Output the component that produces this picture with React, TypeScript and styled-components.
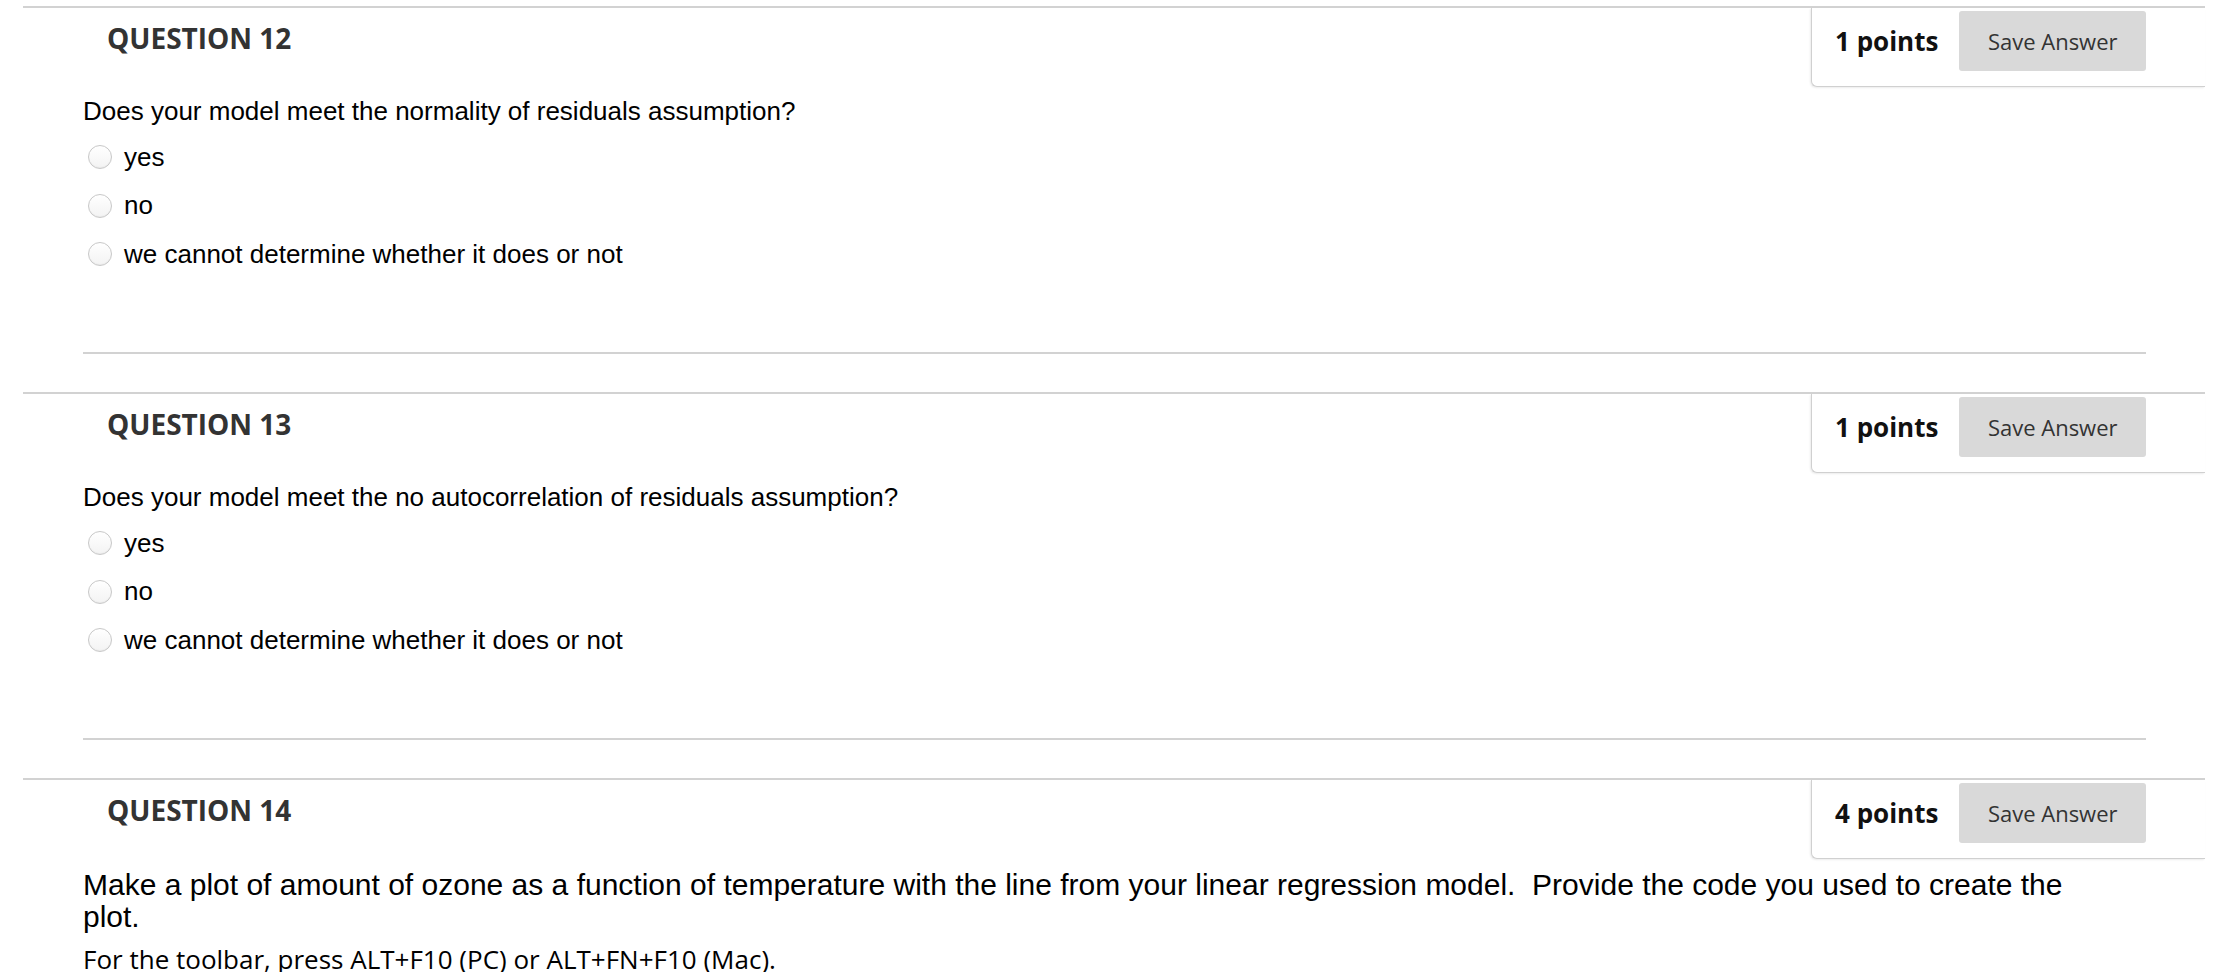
import styled, { createGlobalStyle } from "styled-components";

type Question = {
  number: number;
  points: number;
  prompt: string;
  options?: string[];
  large?: boolean;
  hint?: string;
};

const answers = ["yes", "no", "we cannot determine whether it does or not"];

const questions: Question[] = [
  {
    number: 12,
    points: 1,
    prompt: "Does your model meet the normality of residuals assumption?",
    options: answers,
  },
  {
    number: 13,
    points: 1,
    prompt: "Does your model meet the no autocorrelation of residuals assumption?",
    options: answers,
  },
  {
    number: 14,
    points: 4,
    large: true,
    prompt:
      "Make a plot of amount of ozone as a function of temperature with the line from your linear regression model.\u00a0 Provide the code you used to create the plot.",
    hint: "For the toolbar, press ALT+F10 (PC) or ALT+FN+F10 (Mac).",
  },
];

export default function App() {
  return (
    <>
      <GlobalStyle />
      <Page>
        {questions.map((q) => (
          <QuestionBlock key={q.number}>
            <Header>
              <Title>QUESTION {q.number}</Title>
              <PointsBox>
                <Points>{q.points} points</Points>
                <SaveButton type="button">Save Answer</SaveButton>
              </PointsBox>
            </Header>
            <Body>
              <Prompt $large={q.large}>{q.prompt}</Prompt>
              {q.hint && <Hint>{q.hint}</Hint>}
              {q.options && (
                <Options>
                  {q.options.map((opt) => (
                    <Option key={opt}>
                      <Radio />
                      <OptionLabel>{opt}</OptionLabel>
                    </Option>
                  ))}
                </Options>
              )}
              {q.options && <Separator />}
            </Body>
          </QuestionBlock>
        ))}
      </Page>
    </>
  );
}

const GlobalStyle = createGlobalStyle`
  html, body {
    margin: 0;
    padding: 0;
    background: #ffffff;
    overflow: hidden;
  }
  body {
    padding-top: 6px;
  }
`;

const Page = styled.div`
  display: flex;
  flex-direction: column;
  padding-left: 23px;
  width: 2182px;
`;

const QuestionBlock = styled.section`
  border-top: 2px solid #d2d2d2;
  display: flex;
  flex-direction: column;
`;

const Header = styled.div`
  display: flex;
  justify-content: space-between;
  align-items: flex-start;
  height: 78px;
`;

const Title = styled.h2`
  margin: 12px 0 0 84px;
  font-family: "Open Sans", sans-serif;
  font-weight: 700;
  font-size: 28px;
  line-height: 36px;
  color: #333333;
`;

const PointsBox = styled.div`
  box-sizing: border-box;
  width: 394px;
  height: 79px;
  display: flex;
  align-items: center;
  gap: 21px;
  padding: 0 59px 12px 23px;
  border-left: 1px solid #d0d0d0;
  border-bottom: 1px solid #d0d0d0;
  border-bottom-left-radius: 6px;
  box-shadow: -1px 1px 2px rgba(0, 0, 0, 0.08);
  background: #ffffff;
`;

const Points = styled.span`
  font-family: "Open Sans", sans-serif;
  font-weight: 700;
  font-size: 26px;
  color: #111111;
  white-space: nowrap;
`;

const SaveButton = styled.button`
  width: 187px;
  height: 60px;
  border: none;
  border-radius: 3px;
  background: #d9d9d9;
  font-family: "Open Sans", sans-serif;
  font-size: 22px;
  color: #333333;
  padding: 0;
  cursor: pointer;
`;

const Body = styled.div`
  display: flex;
  flex-direction: column;
  padding-left: 60px;
  width: 2037px;
`;

const Prompt = styled.p<{ $large?: boolean }>`
  margin: ${(p) => (p.$large ? "11px 0 0" : "10px 0 0")};
  font-family: "Liberation Sans", Arial, Helvetica, sans-serif;
  font-size: ${(p) => (p.$large ? "30px" : "26px")};
  line-height: ${(p) => (p.$large ? "32px" : "30px")};
  color: #000000;
`;

const Hint = styled.p`
  margin: 11px 0 0;
  font-family: "Open Sans", sans-serif;
  font-size: 26px;
  line-height: 30px;
  color: #000000;
`;

const Options = styled.div`
  display: flex;
  flex-direction: column;
  margin-top: 7px;
`;

const Option = styled.label`
  display: flex;
  align-items: center;
  height: 48.5px;
  gap: 12px;
  padding-left: 5px;
`;

const Radio = styled.span`
  box-sizing: border-box;
  width: 24px;
  height: 24px;
  border-radius: 50%;
  border: 1px solid #c8c8c8;
  background: linear-gradient(#ffffff, #f3f3f3);
  box-shadow: inset 0 -1px 1px rgba(0, 0, 0, 0.04);
  flex: 0 0 auto;
`;

const OptionLabel = styled.span`
  font-family: "Liberation Sans", Arial, Helvetica, sans-serif;
  font-size: 26px;
  color: #000000;
`;

const Separator = styled.hr`
  margin: 73px 0 38.5px;
  width: 2063px;
  border: none;
  border-top: 2px solid #d2d2d2;
  height: 0;
`;
